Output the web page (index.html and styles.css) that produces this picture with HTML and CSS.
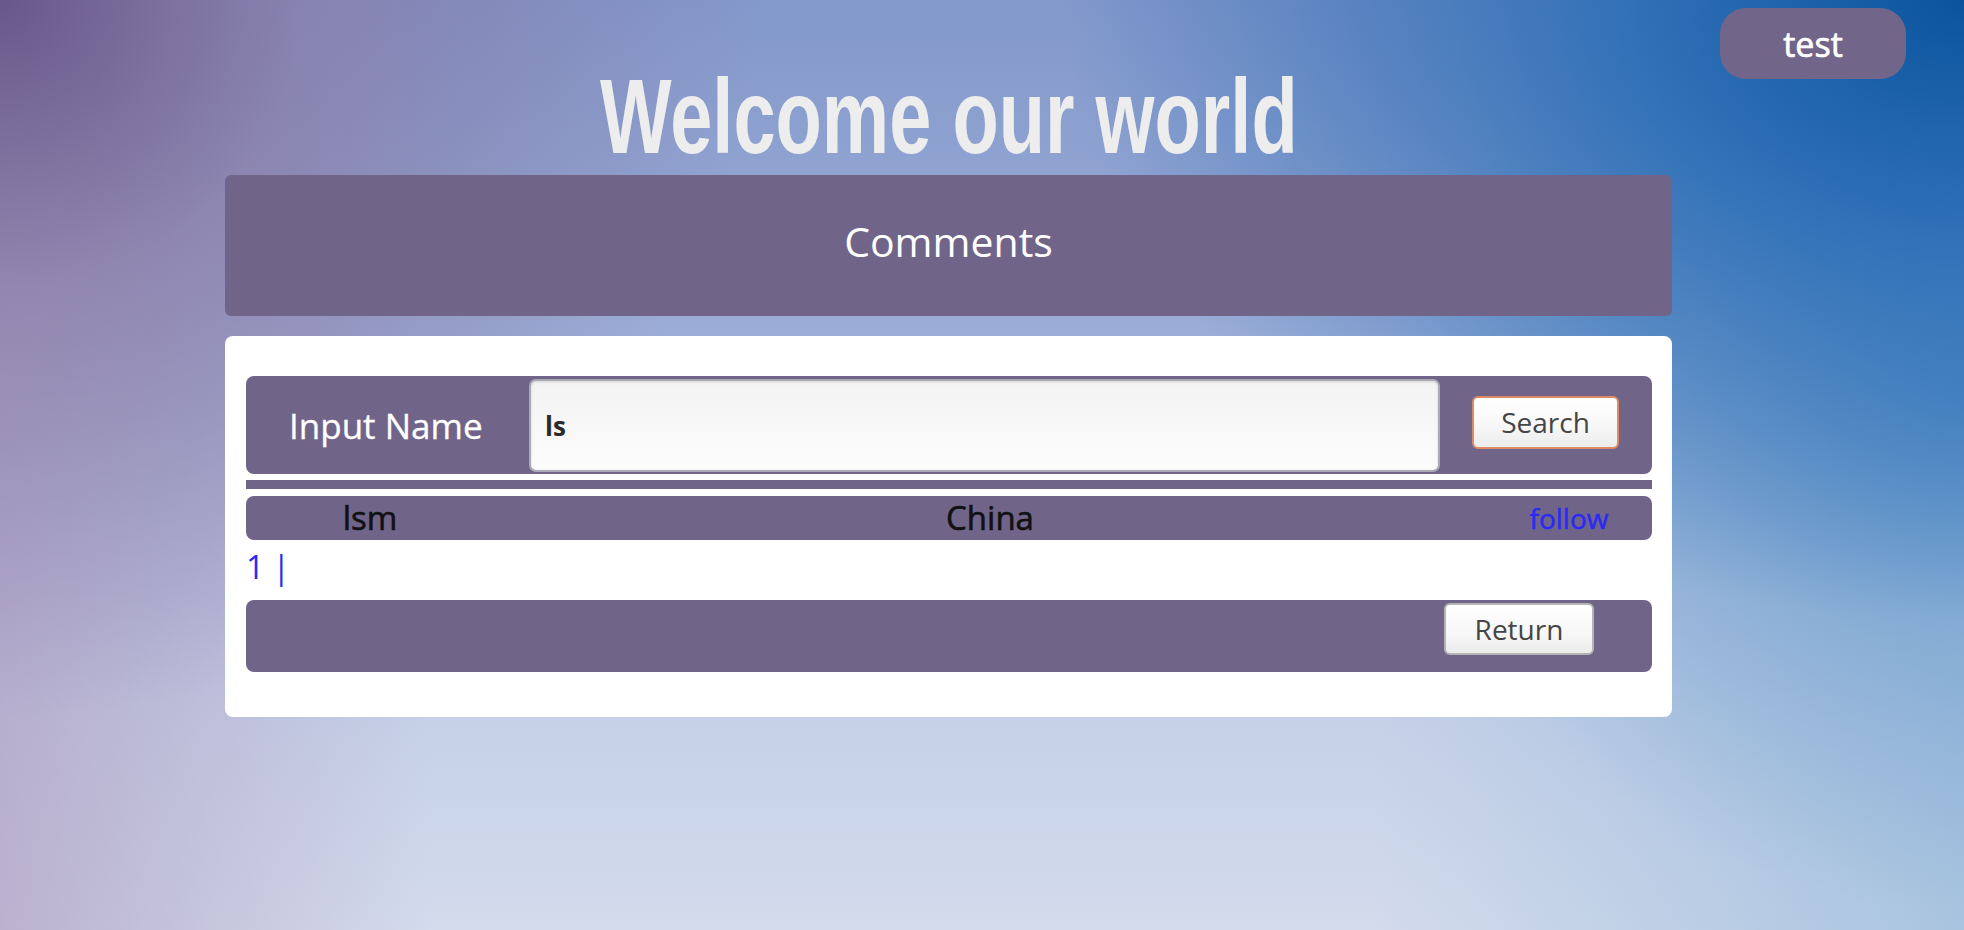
FILE: index.html
```html
<!DOCTYPE html>
<html lang="en">
<head>
<meta charset="utf-8">
<title>Comments</title>
<link rel="stylesheet" href="styles.css">
</head>
<body>
<div class="page">
  <a class="user-btn" href="#">test</a>
  <main class="main">
    <h1 class="title"><span class="title-text">Welcome our world</span></h1>
    <div class="panel-head">Comments</div>
    <div class="card">
      <form class="search-row">
        <label class="search-label" for="name">Input Name</label>
        <input class="search-input" id="name" type="text" value="ls">
        <button class="btn btn-search" type="button">Search</button>
      </form>
      <div class="divider"></div>
      <div class="result-row">
        <span class="cell">lsm</span>
        <span class="cell">China</span>
        <a class="cell follow" href="#">follow</a>
      </div>
      <div class="pager"><a href="#">1</a> <a href="#">|</a></div>
      <div class="actions">
        <button class="btn btn-return" type="button">Return</button>
      </div>
    </div>
  </main>
</div>
</body>
</html>
```
FILE: styles.css
```css
html, body {
  margin: 0;
  padding: 0;
}

body {
  width: 1964px;
  height: 930px;
  overflow: hidden;
  font-family: "Open Sans", "Liberation Sans", sans-serif;
  background:
    radial-gradient(ellipse 900px 620px at 100% 0%, rgba(10, 84, 158, 1) 0%, rgba(32, 102, 178, 0.85) 35%, rgba(70, 135, 198, 0) 100%),
    radial-gradient(ellipse 760px 720px at 0% 0%, rgba(104, 88, 138, 1) 0%, rgba(132, 118, 162, 0.65) 40%, rgba(150, 140, 180, 0) 100%),
    linear-gradient(to right, rgba(178, 164, 198, 0.75) 0%, rgba(178, 164, 198, 0) 22%),
    radial-gradient(ellipse 560px 520px at 100% 42%, rgba(88, 145, 200, 0.85) 0%, rgba(100, 152, 202, 0.4) 50%, rgba(110, 158, 205, 0) 100%),
    linear-gradient(to left, rgba(140, 180, 215, 0.6) 0%, rgba(140, 180, 215, 0) 30%),
    linear-gradient(180deg, #8398cb 0%, #a2b3da 45%, #c6d1e8 78%, #d3dbec 100%);
}

.page {
  position: relative;
  height: 930px;
}

.user-btn {
  position: absolute;
  top: 8px;
  right: 58px;
  width: 186px;
  height: 71px;
  border-radius: 26px;
  background: #716689;
  color: #ffffff;
  font-size: 34px;
  -webkit-text-stroke: 0.7px #ffffff;
  display: flex;
  align-items: center;
  justify-content: center;
  text-decoration: none;
}

.main {
  width: 1447px;
  margin-left: 225px;
  padding-top: 63px;
}

.title {
  margin: 0 0 6px;
  height: 106px;
  text-align: center;
  font-family: "Liberation Sans", Arial, sans-serif;
  font-weight: 700;
  font-size: 106px;
  line-height: 106px;
  color: #ededed;
}

.title-text {
  display: inline-block;
  transform: scaleX(0.715);
  transform-origin: center;
}

.panel-head {
  height: 141px;
  box-sizing: border-box;
  padding-bottom: 9px;
  border-radius: 6px;
  background: #706589;
  color: #ffffff;
  font-size: 41px;
  display: flex;
  align-items: center;
  justify-content: center;
}

.card {
  margin-top: 20px;
  height: 381px;
  box-sizing: border-box;
  padding: 40px 20px 0 21px;
  background: #ffffff;
  border-radius: 8px;
}

.search-row {
  margin: 0;
  height: 98px;
  box-sizing: border-box;
  padding: 0 33px 0 43px;
  border-radius: 8px;
  background: #706589;
  display: flex;
  align-items: center;
}

.search-label {
  flex: 0 0 240px;
  color: #ffffff;
  font-size: 35px;
  -webkit-text-stroke: 0.3px #ffffff;
}

.search-input {
  flex: 0 0 911px;
  height: 93px;
  box-sizing: border-box;
  margin: 1px 0 0;
  padding: 0 14px;
  border: 2px solid #aaaab4;
  border-radius: 7px;
  background: linear-gradient(180deg, #f3f3f3 0%, #fcfcfc 100%);
  box-shadow: inset 0 1px 3px rgba(0, 0, 0, 0.12);
  font-family: "Open Sans", sans-serif;
  font-size: 26px;
  font-weight: 700;
  color: #2a2a2a;
  outline: none;
}

.btn {
  font-family: "Open Sans", sans-serif;
  font-size: 28px;
  color: #454545;
  background: linear-gradient(180deg, #ffffff 0%, #f7f7f7 60%, #ececec 100%);
  border-radius: 6px;
  padding: 0;
  cursor: pointer;
}

.btn-search {
  margin-left: auto;
  margin-top: -6px;
  width: 147px;
  height: 53px;
  border: 2px solid #dc8a66;
}

.divider {
  margin-top: 6px;
  height: 9px;
  background: #706589;
}

.result-row {
  margin-top: 7px;
  height: 44px;
  border-radius: 8px;
  background: #706589;
  display: grid;
  grid-template-columns: 248px 992px 166px;
  align-items: center;
}

.cell {
  text-align: center;
  font-size: 33px;
  color: #111111;
  -webkit-text-stroke: 0.6px #111111;
  line-height: 44px;
}

.follow {
  font-size: 28px;
  color: #2a2af2;
  -webkit-text-stroke: 0.5px #2a2af2;
  text-decoration: none;
}

.pager {
  margin-top: 5px;
  height: 44px;
  font-size: 32px;
  line-height: 44px;
  color: #2a2af2;
}

.pager a {
  color: #2a2af2;
  text-decoration: none;
}

.actions {
  margin-top: 11px;
  height: 72px;
  box-sizing: border-box;
  padding: 3px 58px 0 0;
  border-radius: 8px;
  background: #706589;
  display: flex;
  justify-content: flex-end;
  align-items: flex-start;
}

.btn-return {
  width: 150px;
  height: 52px;
  border: 2px solid #b4b4b4;
}
```
